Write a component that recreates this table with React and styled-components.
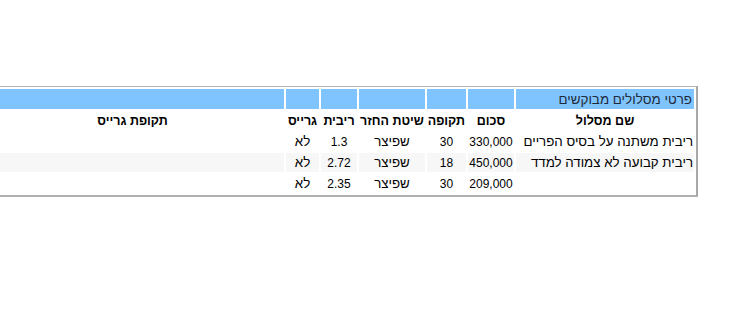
import React from 'react';
import styled, { createGlobalStyle } from 'styled-components';

const GlobalStyle = createGlobalStyle`
  html, body {
    margin: 0;
    padding: 0;
    background: #ffffff;
    overflow: hidden;
  }
  body {
    font-family: "Liberation Sans", "DejaVu Sans", sans-serif;
  }
`;

const Page = styled.div`
  direction: rtl;
  width: 737px;
  height: 321px;
  box-sizing: border-box;
  padding: 86px 39px 0 0;
  overflow: hidden;
`;

const Table = styled.table`
  table-layout: fixed;
  width: 720px;
  border-collapse: separate;
  border-spacing: 2px;
  border-top: 1px solid #b4b4b4;
  border-left: 1px solid #b4b4b4;
  border-right: 2px solid #a8a8a8;
  border-bottom: 2px solid #b0b0b0;
  font-size: 12px;
  color: #000;
`;

const BlueRow = styled.tr`
  height: 20px;

  td {
    background: #80c4ff;
  }
`;

const CaptionCell = styled.td`
  padding: 0 2px 0 1px;
  text-align: right;
  color: #1e2a3a;
  white-space: nowrap;
  font-size: 13.4px;
`;

const HeadCell = styled.th`
  height: 19px;
  padding: 0 1px;
  text-align: center;
  font-weight: bold;
  font-size: 12.5px;
  white-space: nowrap;
  overflow: hidden;
`;

const Row = styled.tr`
  height: 19px;

  td {
    background: ${props => (props.$shade ? '#f7f7f7' : '#ffffff')};
  }
`;

const Cell = styled.td`
  padding: 0 1px;
  text-align: ${props => props.$align || 'center'};
  font-size: ${props => (props.$hebrew ? '13.3px' : '12px')};
  white-space: nowrap;
  overflow: hidden;
`;

const widths = [178, 46, 39, 66, 36, 33, 303];
const headers = ['שם מסלול', 'סכום', 'תקופה', 'שיטת החזר', 'ריבית', 'גרייס', 'תקופת גרייס'];

const rows = [
  { name: 'ריבית משתנה על בסיס הפריים', amount: '330,000', period: '30', method: 'שפיצר', rate: '1.3', grace: 'לא' },
  { name: 'ריבית קבועה לא צמודה למדד', amount: '450,000', period: '18', method: 'שפיצר', rate: '2.72', grace: 'לא' },
  { name: '', amount: '209,000', period: '30', method: 'שפיצר', rate: '2.35', grace: 'לא' },
];

export default function App() {
  return (
    <>
      <GlobalStyle />
      <Page>
        <Table>
          <colgroup>
            {widths.map((w, i) => (
              <col key={i} style={{ width: w }} />
            ))}
          </colgroup>
          <tbody>
            <BlueRow>
              <CaptionCell>פרטי מסלולים מבוקשים</CaptionCell>
              {widths.slice(1).map((w, i) => (
                <td key={i} />
              ))}
            </BlueRow>
            <tr>
              {headers.map((h) => (
                <HeadCell key={h}>{h}</HeadCell>
              ))}
            </tr>
            {rows.map((r, i) => (
              <Row key={i} $shade={i === 1}>
                <Cell $align="right" $hebrew>{r.name}</Cell>
                <Cell>{r.amount}</Cell>
                <Cell>{r.period}</Cell>
                <Cell $hebrew>{r.method}</Cell>
                <Cell>{r.rate}</Cell>
                <Cell $hebrew>{r.grace}</Cell>
                <Cell />
              </Row>
            ))}
          </tbody>
        </Table>
      </Page>
    </>
  );
}
